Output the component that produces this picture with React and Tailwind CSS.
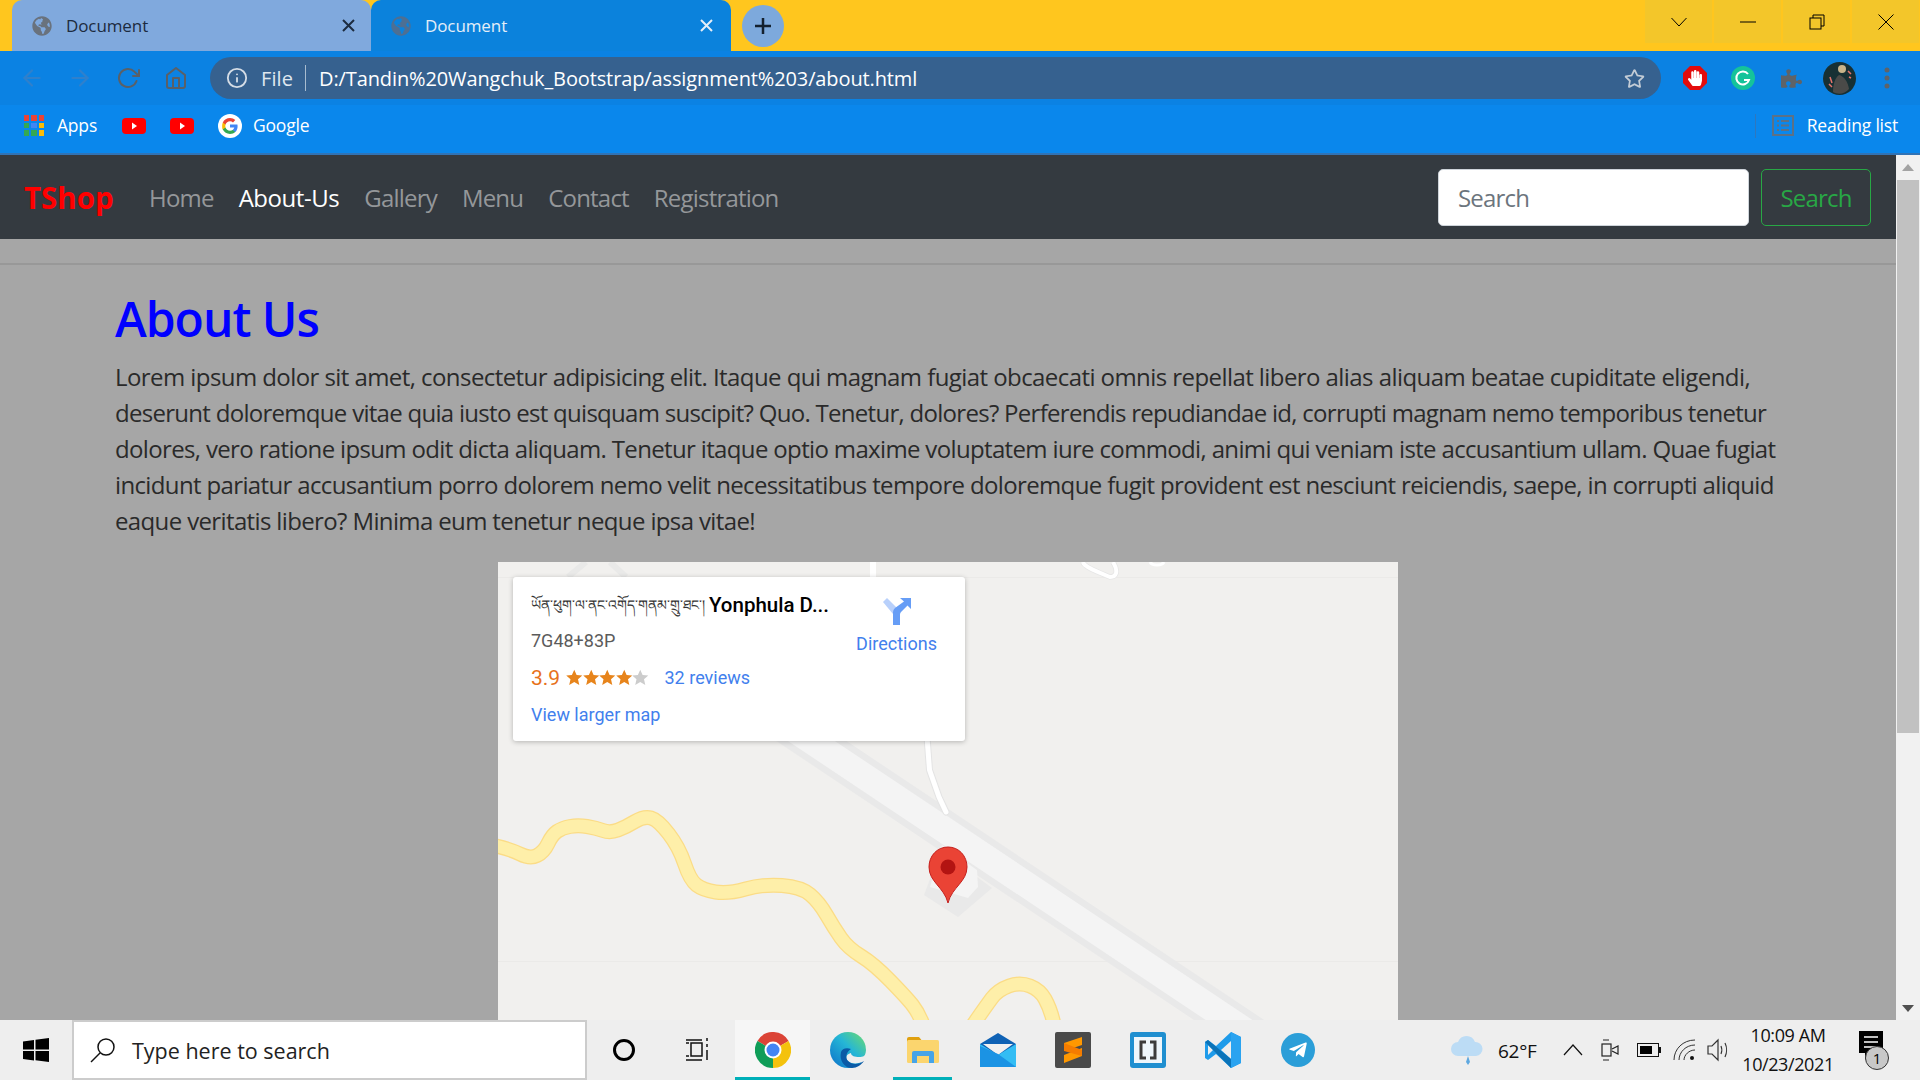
import React from "react";
import { FaGlobeAmericas, FaPuzzlePiece, FaHandPaper, FaRegStar, FaTelegramPlane } from "react-icons/fa";
import { FiArrowLeft, FiArrowRight, FiRotateCw, FiHome, FiInfo } from "react-icons/fi";

const links = ["Home", "About-Us", "Gallery", "Menu", "Contact", "Registration"];

const lorem = [
  ["Lorem ipsum dolor sit amet, consectetur adipisicing elit. Itaque qui magnam fugiat obcaecati omnis repellat libero alias aliquam beatae cupiditate eligendi,", "tracking-[-0.57px]"],
  ["deserunt doloremque vitae quia iusto est quisquam suscipit? Quo. Tenetur, dolores? Perferendis repudiandae id, corrupti magnam nemo temporibus tenetur", "tracking-[-0.71px]"],
  ["dolores, vero ratione ipsum odit dicta aliquam. Tenetur itaque optio maxime voluptatem iure commodi, animi qui veniam iste accusantium ullam. Quae fugiat", "tracking-[-0.65px]"],
  ["incidunt pariatur accusantium porro dolorem nemo velit necessitatibus tempore doloremque fugit provident est nesciunt reiciendis, saepe, in corrupti aliquid", "tracking-[-0.64px]"],
  ["eaque veritatis libero? Minima eum tenetur neque ipsa vitae!", "tracking-[-0.63px]"],
];

const appColors = ["#ea4335", "#ea4335", "#ea4335", "#34a853", "#4285f4", "#fbbc05", "#34a853", "#34a853", "#fbbc05"];

// smooth line through a list of points
const smooth = (pts) => {
  let d = `M${pts[0][0]} ${pts[0][1]}`;
  for (let i = 1; i < pts.length - 1; i++) {
    const mx = (pts[i][0] + pts[i + 1][0]) / 2;
    const my = (pts[i][1] + pts[i + 1][1]) / 2;
    d += ` Q${pts[i][0]} ${pts[i][1]} ${mx} ${my}`;
  }
  const last = pts[pts.length - 1];
  return `${d} L${last[0]} ${last[1]}`;
};

const roadA = smooth([[-6, 283], [12, 287], [32, 297], [46, 290], [54, 273], [64, 266], [80, 263], [98, 266], [112, 271], [128, 265], [146, 254], [160, 258], [181, 285], [192, 318], [205, 328], [230, 332], [265, 322], [303, 325], [321, 340], [336, 366], [350, 386], [376, 402], [409, 436], [420, 450], [428, 470]]);
const roadB = smooth([[470, 470], [488, 444], [500, 428], [522, 420], [542, 428], [552, 446], [558, 470]]);

const Youtube = () => (
  <svg width="24" height="20" viewBox="0 0 24 20">
    <rect y="2" width="24" height="16" rx="4" fill="#ff0000" />
    <path d="M10 6.500l5 3.500-5 3.500z" fill="#fff" />
  </svg>
);

const GoogleG = () => (
  <svg width="24" height="24" viewBox="0 0 24 24">
    <circle cx="12" cy="12" r="12" fill="#fff" />
    <path d="M19.600 12.200c0-.6-.1-1.100-.2-1.600H12v3h4.300c-.2 1-.7 1.800-1.600 2.400v2h2.600c1.500-1.400 2.300-3.400 2.300-5.800z" fill="#4285f4" />
    <path d="M12 20c2.200 0 4-.7 5.300-2l-2.600-2c-.7.500-1.600.8-2.700.8-2.100 0-3.900-1.400-4.500-3.300H4.800v2.100C6.100 18.200 8.800 20 12 20z" fill="#34a853" />
    <path d="M7.500 13.500c-.3-1-.3-2 0-3V8.400H4.800c-.9 1.800-.9 5.400 0 7.200z" fill="#fbbc05" />
    <path d="M12 7.200c1.200 0 2.200.4 3 1.200l2.300-2.300C15.900 4.800 14.100 4 12 4 8.800 4 6.100 5.800 4.800 8.400l2.700 2.100c.6-1.900 2.400-3.300 4.500-3.300z" fill="#ea4335" />
  </svg>
);

const Tab = ({ active }) => (
  <div
    className={`h-full rounded-t-[10px] flex items-center pl-[20px] ${
      active ? "w-[360px] pr-[18px] bg-[#0b82dc] text-[#e4eef8]" : "w-[359px] pr-[16.500px] bg-[#80a9dd] text-[#1c2b3f]"
    }`}
  >
    <FaGlobeAmericas className={`text-[20px] ${active ? "text-[#4d6f93]" : "text-[#69727d]"}`} />
    <span className="ml-[14px] text-[17px] tracking-[-0.1px] flex-1">Document</span>
    <svg width="13" height="13" viewBox="0 0 13 13" stroke="currentColor" strokeWidth="2">
      <path d="M1 1l11 11M12 1L1 12" />
    </svg>
  </div>
);

const WinBtn = ({ children }) => (
  <div className="w-[67px] h-[43px] bg-[#f3c62a] flex items-center justify-center">{children}</div>
);

const TitleBar = () => (
  <div className="h-[51px] bg-[#ffc61e] flex pl-[12px]">
    <Tab />
    <Tab active />
    <div className="ml-[11px] mt-[5px] w-[42px] h-[42px] rounded-full bg-[#7da9dc] flex items-center justify-center">
      <svg width="20" height="20" viewBox="0 0 20 20" stroke="#14212f" strokeWidth="2.500">
        <path d="M10 2v16M2 10h16" />
      </svg>
    </div>
    <div className="ml-auto flex gap-[2px] h-[43px] pr-[1px] text-black">
      <WinBtn>
        <svg width="16" height="10" viewBox="0 0 16 10" fill="none" stroke="currentColor"><path d="M.5 1l7.500 8 7.500-8" /></svg>
      </WinBtn>
      <WinBtn>
        <svg width="16" height="2" viewBox="0 0 16 2" stroke="currentColor"><path d="M0 1h16" /></svg>
      </WinBtn>
      <WinBtn>
        <svg width="16" height="16" viewBox="0 0 16 16" fill="none" stroke="currentColor"><path d="M4 4V1h11v11h-3" /><rect x="1" y="4" width="11" height="11" /></svg>
      </WinBtn>
      <WinBtn>
        <svg width="16" height="16" viewBox="0 0 16 16" stroke="currentColor"><path d="M.5.500l15 15M15.500.500l-15 15" /></svg>
      </WinBtn>
    </div>
  </div>
);

const ToolCell = ({ children }) => <div className="w-[48px] flex items-center justify-center">{children}</div>;

const Toolbar = () => (
  <div className="h-[54px] bg-[#0b82e3] flex items-center pl-[8px]">
    <ToolCell><FiArrowLeft className="text-[26px] text-[#2f80cc]" /></ToolCell>
    <ToolCell><FiArrowRight className="text-[26px] text-[#2f80cc]" /></ToolCell>
    <ToolCell><FiRotateCw className="text-[24px] text-[#5a6067]" /></ToolCell>
    <ToolCell><FiHome className="text-[24px] text-[#5a6067]" /></ToolCell>
    <div className="ml-[10px] w-[1451px] h-[42px] rounded-full bg-[#36618f] flex items-center pl-[16px] pr-[16px] text-[20px]">
      <FiInfo className="text-[22px] text-[#d5dde6]" />
      <span className="ml-[13px] pt-[1px] text-[#dfe7ef] tracking-[0.1px]">File</span>
      <div className="ml-[12px] w-px h-[26px] bg-[#a8bccf]" />
      <span className="ml-[13px] pt-[1px] text-white tracking-[-0.12px]">D:/Tandin%20Wangchuk_Bootstrap/assignment%203/about.html</span>
      <FaRegStar className="ml-auto text-[21px] text-[#c3ccd6]" />
    </div>
    <div className="ml-[10px] flex h-full">
      <ToolCell>
        <svg width="24" height="24" viewBox="0 0 24 24">
          <path d="M7 0h10l7 7v10l-7 7H7l-7-7V7z" fill="#e40b0b" />
        </svg>
        <FaHandPaper className="absolute text-[16px] text-white" />
      </ToolCell>
      <ToolCell>
        <svg width="24" height="24" viewBox="0 0 24 24">
          <circle cx="12" cy="12" r="12" fill="#15c39a" />
          <path d="M17 8a6.500 6.500 0 1 0 1 6h-5" fill="none" stroke="#fff" strokeWidth="2" />
        </svg>
      </ToolCell>
      <ToolCell><FaPuzzlePiece className="text-[21px] text-[#5f6368]" /></ToolCell>
      <ToolCell>
        <svg width="33" height="33" viewBox="0 0 33 33">
          <circle cx="16.500" cy="16.500" r="16.500" fill="#173034" />
          <path d="M10 30c0-8 2-14 6-17 5 1 9 7 10 14-4 5-11 6-16 3z" fill="#4a4a48" />
          <circle cx="19" cy="7" r="4" fill="#c9b48a" />
          <path d="M7 15l2 6M6 22l3 3M25 9l3 3M26 15l2 1" stroke="#e5736c" strokeWidth="1.500" />
        </svg>
      </ToolCell>
      <ToolCell>
        <svg width="6" height="22" viewBox="0 0 6 22" fill="#5f6368">
          <circle cx="3" cy="3" r="2.500" /><circle cx="3" cy="11" r="2.500" /><circle cx="3" cy="19" r="2.500" />
        </svg>
      </ToolCell>
    </div>
  </div>
);

const Bookmarks = () => (
  <div className="h-[50px] bg-[#0a87ec] border-b-2 border-[#3173b5] flex items-center pl-[24px] pb-[7px] text-white text-[17.500px] tracking-[-0.2px]">
    <div className="grid grid-cols-3 gap-[2px] w-[20px]">
      {appColors.map((c, i) => (
        <div key={i} className="h-[5.500px]" style={{ background: c }} />
      ))}
    </div>
    <span className="ml-[13px] w-[41px]">Apps</span>
    <div className="ml-[24px]"><Youtube /></div>
    <div className="ml-[24px]"><Youtube /></div>
    <div className="ml-[24px]"><GoogleG /></div>
    <span className="ml-[11px]">Google</span>
    <div className="ml-auto flex items-center pr-[22px]">
      <div className="w-px h-[24px] bg-[#2f77bd]" />
      <svg className="ml-[16px]" width="22" height="21" viewBox="0 0 22 21" fill="none" stroke="#5c7186" strokeWidth="2">
        <rect x="1" y="1" width="20" height="19" />
        <path d="M5 6h2M9 6h8M5 10.500h2M9 10.500h8M5 15h2M9 15h8" />
      </svg>
      <span className="ml-[13px]">Reading list</span>
    </div>
  </div>
);

const MapCanvas = () => (
  <svg className="w-[900px] h-[458px] block" viewBox="0 0 900 458">
    <rect width="900" height="458" fill="#f1f0ee" />
    <path d="M0 15.500h900M0 399.500h900" stroke="#ebeae8" />
    {/* bits above the info card */}
    <path d="M88 0L70 15M112 0l16 15" stroke="#e9e9e8" strokeWidth="6" />
    <path d="M585 0C586 5 600 10 612 15C618 15 621 10 615 0" stroke="#e6e6e6" strokeWidth="5.500" fill="none" />
    <path d="M585 0C586 5 600 10 612 15C618 15 621 10 615 0" stroke="#fff" strokeWidth="4" fill="none" />
    <path d="M652 0C654 4 664 4 666 0" stroke="#fff" strokeWidth="3" fill="none" />
    <path d="M375 0v20" stroke="#fff" strokeWidth="6" />
    {/* wide road */}
    <path d="M270 150L767 482" stroke="#e9e9e9" strokeWidth="39" />
    <path d="M426 333L460 355L494 326L479 315L438 301Z" fill="#e9e9e9" />
    <path d="M270 150L767 482" stroke="#f4f4f4" strokeWidth="26" />
    <path d="M444 283L432 325L470 336L480 325L479 308Z" fill="#f4f4f4" />
    {/* small white lane */}
    <path d="M429 175L431.500 208L441 235L448 250" fill="none" stroke="#e4e4e4" strokeWidth="7" strokeLinecap="round" strokeLinejoin="round" />
    <path d="M429 175L431.500 208L441 235L448 250" fill="none" stroke="#fff" strokeWidth="5" strokeLinecap="round" strokeLinejoin="round" />
    {/* yellow roads */}
    <path d={roadA} fill="none" stroke="#fbdc86" strokeWidth="15" />
    <path d={roadA} fill="none" stroke="#feefa9" strokeWidth="12.500" />
    <path d={roadB} fill="none" stroke="#fbdc86" strokeWidth="15" />
    <path d={roadB} fill="none" stroke="#feefa9" strokeWidth="12.500" />
    {/* marker */}
    <path d="M450 285c-11 0-19 9-19 20 0 15 15 20 19 36 4-16 19-21 19-36 0-11-8-20-19-20z" fill="#ea4335" stroke="#c5221f" />
    <ellipse cx="450" cy="305" rx="7.500" ry="7.500" fill="#b31412" />
  </svg>
);

const Star = ({ fill }) => (
  <svg width="16.500" height="17" viewBox="0.300 0.500 15.400 15">
    <path d="M8 .800l2.200 4.900 5.300.5-4 3.500 1.200 5.200L8 12.200l-4.700 2.700 1.200-5.200-4-3.500 5.300-.5z" fill={fill} />
  </svg>
);

const InfoCard = () => (
  <div className="absolute left-[15px] top-[15px] w-[452px] h-[164px] bg-white rounded-[3px] shadow-[0_1px_5px_rgba(0,0,0,0.25)] flex font-['Roboto',sans-serif] text-[18px] pl-[18px] pt-[10px]">
    <div className="w-[326px]">
      <div className="flex items-center h-[36px] whitespace-nowrap">
        <span className="w-[178px] text-[14px] text-[#333] font-['Noto_Sans',serif]">ཡོན་ཕུག་ལ་ནང་འགོད་གནམ་གྲུ་ཐང་།</span>
        <span className="text-[20.500px] font-medium text-black">Yonphula D...</span>
      </div>
      <div className="h-[36px] flex items-center text-[#5b5b5b]">7G48+83P</div>
      <div className="h-[37px] flex items-center">
        <span className="text-[#e7711b] text-[21px] w-[35px]">3.9</span>
        <Star fill="#e7841b" /><Star fill="#e7841b" /><Star fill="#e7841b" /><Star fill="#e7841b" /><Star fill="#cccccc" />
        <span className="ml-[16px] text-[#427fed]">32 reviews</span>
      </div>
      <div className="h-[37px] flex items-center text-[#427fed]">View larger map</div>
    </div>
    <div className="w-[79px] flex flex-col items-center pt-[11px]">
      <svg width="28" height="27" viewBox="0 0 28 27">
        <path d="M0 4L4 0L13 9L17 16H10z" fill="#b8d0fb" />
        <path d="M10 27V14Q10 12 12 10L21 3.500L17 0H28V11L24.500 7.500L18 14Q17 15 17 16.500V27z" fill="#669df6" />
      </svg>
      <span className="mt-[1px] text-[#427fed]">Directions</span>
    </div>
  </div>
);

const Navbar = () => (
  <nav className="h-[84px] bg-[#343a40] flex items-center pl-[24px] pr-[25px] pt-[1px]">
    <span className="w-[89px] text-[29.500px] font-bold text-[#ff0000] tracking-[0px]">TShop</span>
    <ul className="flex ml-[36px]">
      {links.map((l) => (
        <li key={l} className={`mr-[25px] ${l === "About-Us" ? "text-white tracking-[-0.45px]" : "text-[#94979a] tracking-[-0.8px]"}`}>{l}</li>
      ))}
    </ul>
    <div className="ml-auto w-[311px] h-[57px] bg-white rounded-[5px] border border-[#ced4da] flex items-center pl-[19px] text-[#6c757d] tracking-[-0.8px]">Search</div>
    <div className="ml-[12px] w-[110px] h-[57px] rounded-[5px] border border-[#28a745] flex items-center justify-center text-[#28a745] tracking-[-0.8px]">Search</div>
  </nav>
);

const Scrollbar = () => (
  <div className="w-[24px] bg-[#f1f1f1] flex flex-col items-center">
    <div className="h-[25px] flex items-center">
      <div className="w-0 h-0 border-x-[6px] border-x-transparent border-b-[7px] border-b-[#a3a3a3]" />
    </div>
    <div className="w-[22px] h-[553px] bg-[#c1c1c1]" />
    <div className="mt-auto h-[24px] flex items-center">
      <div className="w-0 h-0 border-x-[6px] border-x-transparent border-t-[7px] border-t-[#505050]" />
    </div>
  </div>
);

const Page = () => (
  <div className="flex-1 flex min-h-0">
    <div className="flex-1 bg-[#a6a6a6] overflow-hidden text-[24px] leading-[36px]">
      <Navbar />
      <div className="mt-[24px] h-[2px] bg-[#989898]" />
      <div className="pl-[115px]">
        <h1 className="mt-[25px] text-[48px] leading-[57px] font-semibold text-[#0000ff] tracking-[-1px]">About Us</h1>
        <p className="mt-[12px] text-[#2a2a2a] whitespace-nowrap">
          {lorem.map(([line, track]) => (
            <span key={line} className={`block ${track}`}>{line}</span>
          ))}
        </p>
        <div className="relative mt-[23px] ml-[383px] w-[900px]">
          <MapCanvas />
          <InfoCard />
        </div>
      </div>
    </div>
    <Scrollbar />
  </div>
);

const Chrome = () => (
  <svg width="36" height="36" viewBox="0 0 36 36">
    <path d="M18 18L2.400 9A18 18 0 0 1 33.600 9z" fill="#db4437" />
    <path d="M18 18L33.600 9A18 18 0 0 1 18 36z" fill="#f4c20d" />
    <path d="M18 18L18 36A18 18 0 0 1 2.400 9z" fill="#0f9d58" />
    <circle cx="18" cy="18" r="8.500" fill="#fff" />
    <circle cx="18" cy="18" r="6.500" fill="#4285f4" />
  </svg>
);

const Edge = () => (
  <svg width="36" height="36" viewBox="0 0 36 36">
    <defs>
      <linearGradient id="edgeFill" x1="0" y1="1" x2="1" y2="0">
        <stop offset="0" stopColor="#0c6fc9" />
        <stop offset="0.55" stopColor="#25b6d6" />
        <stop offset="1" stopColor="#6fdc6a" />
      </linearGradient>
    </defs>
    <circle cx="18" cy="18" r="18" fill="url(#edgeFill)" />
    <path d="M36 19C36 24 33 25 29 25C25 25 21 24 21 21C17 22 15 25 17 28C21 33 29 32 34 29L40 30V19Z" fill="#eeeeee" />
    <path d="M40 28V38H24L30 33Z" fill="#eeeeee" />
    <path d="M11 20C9 28 14 36 22 36C27 36 31 33 34 29C28 33 22 33 18 29C15 26 16 20 21 17C16 15 12 17 11 20Z" fill="#0b5aa6" />
  </svg>
);

const Folder = () => (
  <svg width="32" height="26" viewBox="0 0 32 26">
    <path d="M0 2a2 2 0 0 1 2-2h10l4 5H0z" fill="#e0a00f" />
    <rect y="3" width="32" height="23" rx="1.500" fill="#fbd56e" />
    <path d="M5 26V16a2 2 0 0 1 2-2h18a2 2 0 0 1 2 2v10H22V19H10v7z" fill="#46a4e8" />
  </svg>
);

const Mail = () => (
  <svg width="36" height="34" viewBox="0 0 36 34">
    <path d="M18 0L36 11V34H0V11z" fill="#0f62b5" />
    <path d="M3 11H33L18 22z" fill="#f1f1f1" />
    <path d="M0 11L18 22 36 11V34H0z" fill="#33bdf4" />
    <path d="M0 13V34H36L18 21z" fill="#1b93e4" />
  </svg>
);

const Sublime = () => (
  <svg width="36" height="36" viewBox="0 0 36 36">
    <rect width="36" height="36" rx="2" fill="#4a4a4a" />
    <path d="M27 5v8L9 19v-8z" fill="#ff9800" />
    <path d="M27 16v8L9 31v-8z" fill="#ff9800" />
    <path d="M9 11l18 7v6L9 19z" fill="#f57c00" />
  </svg>
);

const Brackets = () => (
  <svg width="36" height="36" viewBox="0 0 36 36">
    <rect width="36" height="36" rx="3" fill="#1f8fd0" />
    <rect x="4" y="5" width="28" height="26" fill="#eef6fb" />
    <path d="M16 10h-5v16h5M20 10h5v16h-5" fill="none" stroke="#3c3c3c" strokeWidth="3" />
  </svg>
);

const VsCode = () => (
  <svg width="36" height="36" viewBox="0 0 36 36">
    <path d="M26 0L36 5V31L26 36 11 22 3 28 0 26V10L3 8 11 14z" fill="#1e9bea" />
    <path d="M26 9L16 18 26 27z" fill="#eeeeee" />
    <path d="M3 13L8 18 3 23z" fill="#eeeeee" />
    <path d="M26 0L36 5V31L26 36z" fill="#2aa3f0" />
    <path d="M0 10L3 8 26 27V36z" fill="#0b73b8" />
  </svg>
);

const Cell = ({ active, line, children }) => (
  <div className={`w-[75px] h-full flex items-center justify-center ${active ? "bg-[#f6f6f6]" : ""} relative`}>
    {children}
    {line && <div className={`absolute bottom-0 h-[3px] bg-[#00b0b9] ${active ? "w-full" : "w-[59px]"}`} />}
  </div>
);

const Taskbar = () => (
  <div className="h-[60px] bg-[#eeeeee] flex items-center">
    <div className="w-[72px] flex justify-center">
      <svg width="26" height="24" viewBox="0 0 26 24" fill="#000">
        <path d="M0 3.500L11 2v9.500H0zM12.500 1.800L26 0v11.500H12.500zM0 13h11v9.500L0 21zM12.500 13H26v11l-13.500-1.800z" />
      </svg>
    </div>
    <div className="w-[515px] h-full bg-white border-2 border-[#cccccc] flex items-center pl-[16px] text-[21.500px] text-[#222]">
      <svg width="26" height="26" viewBox="0 0 26 26" fill="none" stroke="#111" strokeWidth="1.500">
        <circle cx="16" cy="10" r="8" /><path d="M10 16L1 25" />
      </svg>
      <span className="ml-[16px] pt-[3px]">Type here to search</span>
    </div>
    <div className="w-[73px] flex justify-center">
      <div className="w-[22px] h-[22px] rounded-full border-[3px] border-black" />
    </div>
    <div className="w-[75px] flex justify-center">
      <svg width="24" height="24" viewBox="0 0 24 24" fill="none" stroke="#111" strokeWidth="1.500">
        <rect x="5" y="5" width="11" height="13" /><path d="M0 2h16M0 22h16M0 5h3M0 18h3M21 0v3M21 6v3M21 12v10" />
      </svg>
    </div>
    <Cell active line><Chrome /></Cell>
    <Cell><Edge /></Cell>
    <Cell line><Folder /></Cell>
    <Cell><Mail /></Cell>
    <Cell><Sublime /></Cell>
    <Cell><Brackets /></Cell>
    <Cell><VsCode /></Cell>
    <Cell>
      <div className="w-[34px] h-[34px] rounded-full bg-[#2b9ed8] flex items-center justify-center">
        <FaTelegramPlane className="text-[20px] text-white" />
      </div>
    </Cell>
    {/* tray */}
    <svg className="ml-[113px]" width="38" height="32" viewBox="0 0 38 32">
      <path d="M10 22a7 7 0 0 1 0-14 9 9 0 0 1 17 0 7 7 0 0 1 1 14z" fill="#bcdcf5" />
      <path d="M20 22l2 6-2 3-2-3z" fill="#5ea8e0" />
    </svg>
    <span className="ml-[12px] w-[40px] pt-[3px] text-[19px] text-[#111] tracking-[-0.3px] whitespace-nowrap">62°F</span>
    <svg className="ml-[25px]" width="20" height="12" viewBox="0 0 20 12" fill="none" stroke="#111" strokeWidth="1.200"><path d="M1 11l9-10 9 10" /></svg>
    <svg className="ml-[17px]" width="20" height="24" viewBox="0 0 20 24" fill="none" stroke="#222" strokeWidth="1.200">
      <path d="M3 2h6M3 22h6" /><rect x="2" y="6" width="9" height="12" /><path d="M12 11l6-3v8l-6-3" />
    </svg>
    <svg className="ml-[17px]" width="24" height="14" viewBox="0 0 24 14">
      <rect x=".500" y=".500" width="21" height="13" fill="none" stroke="#111" />
      <rect x="3" y="3" width="12" height="8" fill="#000" /><rect x="22" y="4" width="2" height="6" fill="#111" />
    </svg>
    <svg className="ml-[12px]" width="24" height="22" viewBox="0 0 24 22" fill="none" stroke="#333">
      <path d="M1 21C1 10 10 1 22 1M6 21c0-8 7-15 16-15M11 21c0-5 5-10 11-10" /><circle cx="19" cy="19" r="2" fill="#111" stroke="none" />
    </svg>
    <svg className="ml-[10px]" width="22" height="24" viewBox="0 0 22 24" fill="none" stroke="#333" strokeWidth="1.200">
      <path d="M1 8h4l6-6v20l-6-6H1z" /><path d="M14 8c1 2 1 6 0 8M18 5c2 4 2 10 0 14" />
    </svg>
    <div className="ml-[14px] w-[90px] flex flex-col items-center text-[18px] leading-[29px] text-[#111] tracking-[-0.4px]">
      <span>10:09 AM</span>
      <span>10/23/2021</span>
    </div>
    <div className="ml-[22px] relative w-[32px] h-[44px]">
      <svg className="mt-[3px] ml-[4px]" width="24" height="30" viewBox="0 0 24 30">
        <path d="M0 0h24v22H12l-6 7v-7H0z" fill="#000" />
        <path d="M5 6h14M5 11h14M5 16h14" stroke="#fff" strokeWidth="1.500" />
      </svg>
      <div className="absolute left-[10px] top-[18px] w-[24px] h-[24px] rounded-full bg-[#c8c8c8] border border-[#333] flex items-center justify-center text-[15px] text-black">1</div>
    </div>
  </div>
);

const App = () => (
  <div className="w-[1920px] h-[1080px] flex flex-col overflow-hidden font-['Open_Sans',sans-serif]">
    <TitleBar />
    <Toolbar />
    <Bookmarks />
    <Page />
    <Taskbar />
  </div>
);

export default App;
